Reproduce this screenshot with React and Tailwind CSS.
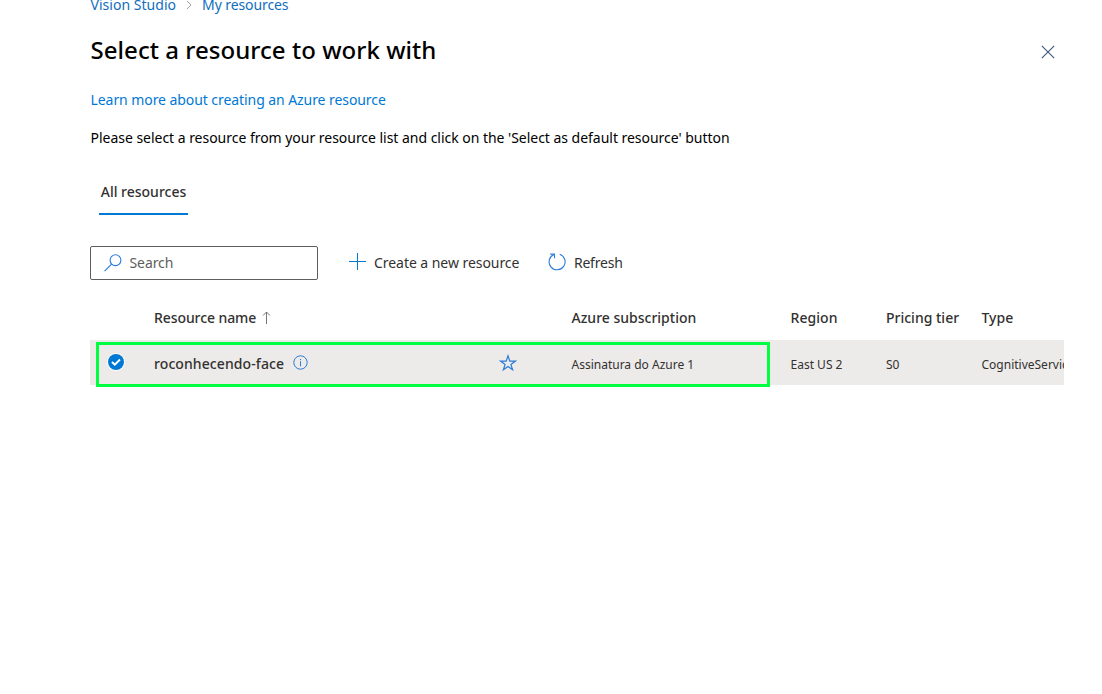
import React from "react";

function Crumbs() {
  return (
    <nav className="-mt-[7px] flex h-[22px] items-center text-[14px] text-[#106ebe]">
      <a className="whitespace-nowrap tracking-[0.03px]">Vision Studio</a>
      <svg className="ml-[9px] mr-[9px] mt-px" width="8" height="10" viewBox="0 0 8 10" fill="none" stroke="#a19f9d">
        <path d="M2 1l4 4-4 4" />
      </svg>
      <a className="whitespace-nowrap tracking-[-0.1px]">My resources</a>
    </nav>
  );
}

function SearchIcon() {
  return (
    <svg width="18" height="18" viewBox="0 0 18 18" fill="none" stroke="#2b7cd9" strokeWidth="1.1">
      <circle cx="11.5" cy="6.2" r="5.4" />
      <path d="M7.6 10.1L.6 17.1" />
    </svg>
  );
}

function PlusIcon() {
  return (
    <svg width="17" height="17" viewBox="0 0 17 17" fill="none" stroke="#0078d4">
      <path d="M8.5 0v17M0 8.5h17" />
    </svg>
  );
}

function RefreshIcon() {
  return (
    <svg width="18" height="18" viewBox="0 0 18 18" fill="none" stroke="#2b7cd9" strokeWidth="1.1">
      <path d="M11.7 1.2A8 8 0 1 1 6 1.4" />
      <path d="M2.2 1.1H6.5V5.2" />
    </svg>
  );
}

function InfoIcon() {
  return (
    <svg width="15" height="15" viewBox="0 0 15 15" fill="none" stroke="#2b7cd9">
      <circle cx="7.5" cy="7.5" r="6.7" />
      <path d="M7.5 6.3v5M7.5 4v1.2" />
    </svg>
  );
}

function StarIcon() {
  return (
    <svg width="18" height="18" viewBox="0 0 18 18" fill="none" stroke="#2b7cd9" strokeWidth="1.2">
      <path d="M9 1.8l1.8 5.3h5.6l-4.5 3.3 1.7 5.4L9 12.5l-4.6 3.3 1.7-5.4-4.5-3.3h5.6z" />
    </svg>
  );
}

function CheckIcon() {
  return (
    <svg width="18" height="18" viewBox="0 0 18 18" fill="none">
      <circle cx="9" cy="9" r="9" fill="#fff" />
      <circle cx="9" cy="9" r="8" fill="#0078d4" />
      <path d="M5 9l2.8 2.7L13 6.5" stroke="#fff" strokeWidth="2" />
    </svg>
  );
}

function ResourceTable() {
  return (
    <section className="mt-[15px] whitespace-nowrap">
      <div className="grid h-[45px] grid-cols-[64px_345px_72.5px_219px_95.5px_95.5px_minmax(0,1fr)] items-center pb-px text-[14px] font-medium">
        <span />
        <span className="flex items-center">
          <span className="tracking-[-0.08px]">Resource name</span>
          <svg className="ml-[6px]" width="9" height="13" viewBox="0 0 9 13" fill="none" stroke="#797775">
            <path d="M4.5 13V1M1 4.5L4.5 1 8 4.5" />
          </svg>
        </span>
        <span />
        <span>Azure subscription</span>
        <span className="tracking-[0.05px]">Region</span>
        <span>Pricing tier</span>
        <span>Type</span>
      </div>
      <div className="relative h-[45px] bg-[#edebe9]">
        <div className="grid h-full grid-cols-[64px_345px_72.5px_219px_95.5px_95.5px_minmax(0,1fr)] items-center text-[12px]">
          <span className="pb-px pl-[17px]"><CheckIcon /></span>
          <span className="flex items-center text-[14px] font-medium">
            <span className="pt-[2px] tracking-[0.09px]">roconhecendo-face</span>
            <span className="ml-[9px]"><InfoIcon /></span>
          </span>
          <StarIcon />
          <span className="pt-[4px]">Assinatura do Azure 1</span>
          <span className="pt-[4px]">East US 2</span>
          <span className="pt-[4px]">S0</span>
          <span className="overflow-hidden pt-[4px]">CognitiveServices</span>
        </div>
        <div className="pointer-events-none absolute left-[6px] top-[2px] h-[45px] w-[674px] border-[3px] border-[#00ff40]" />
      </div>
    </section>
  );
}

export default function App() {
  return (
    <div className="h-[694px] w-full overflow-hidden bg-white pl-[90px] pr-[38px] font-['Noto_Sans',sans-serif] text-[#323130]">
      <div className="pl-[0.5px]">
        <Crumbs />
        <header className="mt-[14px] flex h-[42px] items-center justify-between">
          <h1 className="whitespace-nowrap text-[24px] font-medium tracking-[0.04px] text-black">Select a resource to work with</h1>
          <button className="mr-[9px] mt-[4px]">
            <svg width="14" height="14" viewBox="0 0 14 14" fill="none" stroke="#3b5878" strokeWidth="1.1">
              <path d="M.8.8l12.4 12.4M13.2.8L.8 13.2" />
            </svg>
          </button>
        </header>
        <p className="mt-[17px] flex h-[22px] items-center text-[14px] tracking-[-0.07px] text-[#0078d4]">
          <a>Learn more about creating an Azure resource</a>
        </p>
        <p className="mt-[16px] flex h-[22px] items-center whitespace-nowrap text-[14px] tracking-[-0.028px] text-black">
          Please select a resource from your resource list and click on the 'Select as default resource' button
        </p>
      </div>
      <div className="ml-[9px] mt-[21px] flex h-[46px] w-[89px] items-center justify-center border-b-2 border-[#0078d4] text-[14px] font-medium">
        <span className="whitespace-nowrap">All resources</span>
      </div>
      <div className="mt-[31px] flex h-[34px] items-center text-[14px]">
        <div className="flex h-[34px] w-[228px] items-center rounded-[2px] border border-[#605e5c] pl-[13px] text-[#605e5c]">
          <SearchIcon />
          <span className="ml-[7.5px] pb-[2px] tracking-[-0.08px]">Search</span>
        </div>
        <button className="ml-[31px] flex items-center pb-[3px]">
          <PlusIcon />
          <span className="ml-[8px] whitespace-nowrap pt-px tracking-[-0.05px]">Create a new resource</span>
        </button>
        <button className="ml-[28.5px] flex items-center pb-[3px]">
          <RefreshIcon />
          <span className="ml-[8px] pt-px tracking-[-0.2px]">Refresh</span>
        </button>
      </div>
      <ResourceTable />
    </div>
  );
}
